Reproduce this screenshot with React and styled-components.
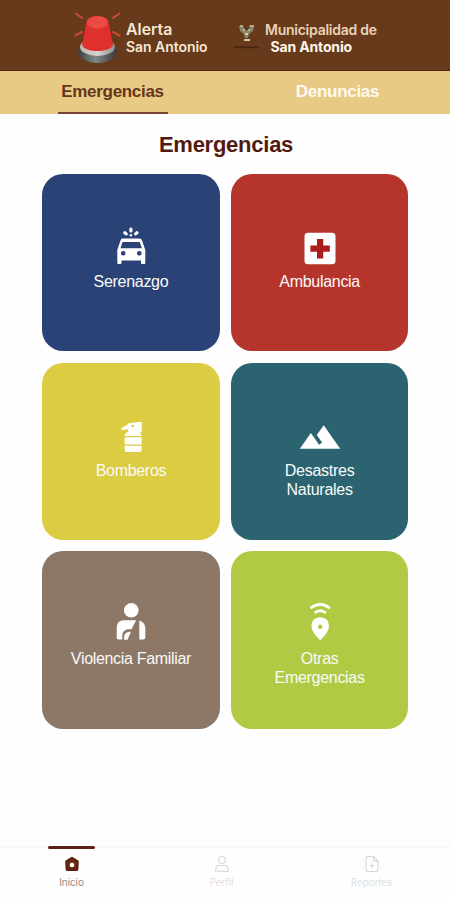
import React from "react";
import styled, { createGlobalStyle } from "styled-components";

const GlobalStyle = createGlobalStyle`
	* {
		box-sizing: border-box;
	}
	body {
		margin: 0;
		background-color: #fefefe;
		font-family: "Liberation Sans", Arial, sans-serif;
	}
	p, h1 {
		margin: 0;
	}
`;
const Screen = styled.div`
	width: 450px;
	height: 900px;
	display: flex;
	flex-direction: column;
	overflow: hidden;
`;
const Header = styled.header`
	height: 71px;
	flex-shrink: 0;
	display: flex;
	align-items: flex-start;
	padding-left: 72px;
	background-color: #673a1c;
	border-bottom: 1px solid #57290f;
`;
const SirenLogo = styled.svg`
	width: 51px;
	height: 56px;
	margin-top: 9px;
`;
const TownLogo = styled.svg`
	width: 30px;
	height: 30px;
	margin: 22px 0 0 25px;
`;
const BrandText = styled.div`
	display: flex;
	flex-direction: column;
	margin: 21px 0 0 ${(props) => props.$gap};
	width: ${(props) => props.$width};
	font-family: Inter, sans-serif;
	color: #f6e9d5;
	white-space: nowrap;
`;
const BrandLine = styled.p`
	font-size: ${(props) => props.$size};
	font-weight: ${(props) => props.$weight || 600};
	letter-spacing: ${(props) => props.$spacing || "0"};
	line-height: 17px;
	padding-left: ${(props) => props.$indent || "0"};
	color: ${(props) => props.$color || "inherit"};
`;
const Tabs = styled.nav`
	height: 43px;
	flex-shrink: 0;
	display: grid;
	grid-template-columns: 1fr 1fr;
	justify-items: center;
	background-color: #e8ca84;
`;
const Tab = styled.button`
	width: 110px;
	padding: 0;
	border: none;
	border-bottom: 2px solid ${(props) => (props.$active ? "#78442f" : "transparent")};
	background: none;
	font-family: inherit;
	font-size: 17px;
	font-weight: bold;
	letter-spacing: -0.3px;
	color: ${(props) => (props.$active ? "#65351b" : "#fffaf0")};
`;
const Title = styled.h1`
	margin: 18px 0 17px 2px;
	text-align: center;
	font-size: 22px;
	line-height: 25px;
	letter-spacing: -0.25px;
	color: #52190f;
`;
const CardGrid = styled.main`
	display: grid;
	grid-template-columns: repeat(2, 177.3px);
	grid-auto-rows: 177.3px;
	gap: 11.4px;
	padding-left: 42.3px;
	flex: 1;
`;
const Card = styled.button`
	display: flex;
	flex-direction: column;
	align-items: center;
	padding: 53px 20px 0;
	border: none;
	border-radius: 21px;
	background-color: ${(props) => props.$color};
	color: #fafafa;
`;
const CardIcon = styled.svg`
	width: 44px;
	height: 40px;
	flex-shrink: 0;
	overflow: visible;
	fill: #fff;
`;
const CardLabel = styled.span`
	margin-top: 5px;
	font-family: "Liberation Sans", Arial, sans-serif;
	font-size: 16px;
	line-height: 19px;
	letter-spacing: ${(props) => props.$spacing};
	white-space: pre-line;
`;
const BottomNav = styled.nav`
	height: 54px;
	flex-shrink: 0;
	display: grid;
	grid-template-columns: 143px 157px 143px;
	border-top: 2px solid #f8f8f8;
`;
const NavItem = styled.div`
	display: flex;
	flex-direction: column;
	align-items: center;
	color: ${(props) => (props.$active ? "#6d6462" : "#d6d6d6")};
`;
const NavMark = styled.div`
	width: 47px;
	height: 3px;
	margin-top: -2px;
	border-radius: 2px;
	background-color: ${(props) => (props.$active ? "#5b2017" : "transparent")};
`;
const NavIcon = styled.svg`
	width: 18px;
	height: 18px;
	margin-top: 6px;
	fill: none;
	stroke: currentColor;
	stroke-width: 1.1;
`;
const NavLabel = styled.span`
	margin-top: 2px;
	font-family: Inter, sans-serif;
	font-weight: 300;
	font-size: 10px;
	line-height: 14px;
`;

function Siren() {
	return (
		<SirenLogo viewBox="0 0 51 56">
			<defs>
				<linearGradient id="base" x1="0" x2="1">
					<stop offset="0" stopColor="#3c403d" />
					<stop offset="0.45" stopColor="#7f8788" />
					<stop offset="1" stopColor="#3b3833" />
				</linearGradient>
				<linearGradient id="rim" x1="0" x2="1">
					<stop offset="0" stopColor="#b9b8b0" />
					<stop offset="0.5" stopColor="#d9d2ce" />
					<stop offset="1" stopColor="#8e8f8c" />
				</linearGradient>
			</defs>
			<ellipse cx="25.500" cy="42" rx="19.500" ry="12" fill="url(#base)" />
			<ellipse cx="25.500" cy="38" rx="17.500" ry="9" fill="url(#rim)" />
			<path d="M14.500 13C15 5 36 5 36.500 13L41 36C38 44 13 44 10 36Z" fill="#df302d" />
			<ellipse cx="25.500" cy="13.500" rx="10.500" ry="6.200" fill="#e94a42" />
			<g stroke="#cf4837" strokeWidth="2" strokeLinecap="round">
				<path d="M3.500 4.500l6.500 4.300M47.500 4.500l-6.500 4.300M3.500 26.500l6.500-3.500M47.500 26.500l-6.500-3.500" />
			</g>
		</SirenLogo>
	);
}

function Town() {
	return (
		<TownLogo viewBox="0 0 30 30">
			<path d="M6 4q3-2 5 1l2 4 2-4q2-3 6-1l-1 5-4 3-1 4h-3l-1-4-4-3z" fill="#8b8468" />
			<path d="M7 4h3M17 4h4M10 8h7" stroke="#c9bf9c" strokeWidth="1.500" />
			<path d="M11.500 5l2 3 3-3" fill="none" stroke="#40372b" strokeWidth="1.500" />
			<path d="M12 12h3M11 18h6" stroke="#d6c8a6" strokeWidth="2" />
			<path d="M1 25.300h25" stroke="#4a2611" strokeWidth="1.800" />
		</TownLogo>
	);
}

const patrolIcon = (
	<>
		<g stroke="#fff" strokeWidth="3.200" strokeLinecap="round">
			<path d="M21.900 2.200v1.800M15.800 5.700l1.400 1.200M28 5.700l-1.400 1.200" />
		</g>
		<circle cx="21.900" cy="8.300" r="1.300" />
		<path
			fillRule="evenodd"
			d="M13.500 11.500h17q2 0 2.500 2l3.300 9.500v13q0 1-1 1h-2.300q-1 0-1-1v-2.500H12.500V36q0 1-1 1H9.300q-1 0-1-1V23l3.200-9.500q.5-2 2-2zM13.500 15l-2 6.200h21.300l-2-6.200zM14.200 24a2.300 2.300 0 100 4.600 2.300 2.300 0 000-4.600zM30.300 24a2.300 2.300 0 100 4.600 2.300 2.300 0 000-4.600z"
		/>
	</>
);
const ambulanceIcon = (
	<>
		<rect x="6.500" y="5.700" width="31" height="31.500" rx="3.500" />
		<path d="M19 12h6.200v6.600h6.600v6.200h-6.600v6.600H19v-6.600h-6.600v-6.200H19z" fill="#a91e1b" />
	</>
);
const extinguisherIcon = (
	<path
		fillRule="evenodd"
		d="M20 7.300l9-1.300h3.700v10.500H30q2.700 1.200 2.700 3.500H15.700q0-3 3.700-4.200l-.5-2.500-6.600 1v-2.300l5.200-2.500zM23.700 8.700a1.300 1.300 0 100 2.600 1.300 1.300 0 000-2.600zM15.700 21.200h17v7.400h-17zM15.700 29.800h17v4.200q0 2-2 2h-13q-2 0-2-2z"
	/>
);
const mountainIcon = (
	<path
		transform="translate(0 -2.400) scale(1.836 1.950)"
		d="M14 6l-3.750 5 2.850 3.800-1.600 1.200C9.810 13.750 7 10 7 10l-6 8h22z"
	/>
);
const injuredIcon = (
	<>
		<circle cx="22.300" cy="6.300" r="7.300" />
		<path d="M14 16.300h13.200l-4.700 8.900h-4q-4.700 1-5.200 5.500v4.800H9.500q-1.800 0-1.800-2V23q.3-6 6.300-6.700z" />
		<path d="M20.500 27.800h1.500L18.500 35.700h-3.400v-3.300q.5-4 5.400-4.600z" />
		<path d="M30.300 16.600q5.800 2 6 7.400v9.500q0 2-2 2h-4z" />
	</>
);
const pinIcon = (
	<>
		<g fill="none" stroke="#fff" strokeWidth="2.500">
			<path d="M12.500 4.200q9.700-7.600 19.400 0M16.600 9q5.600-4.700 11.200 0" />
		</g>
		<path
			fillRule="evenodd"
			d="M22.200 13.200q8.600.3 8.800 8.800 0 6.200-8.800 14.200-8.800-8-8.800-14.200.2-8.500 8.800-8.800zM22.200 20.500a2.200 2.200 0 100 4.400 2.200 2.200 0 000-4.400z"
		/>
	</>
);

const emergencies = [
	{ label: "Serenazgo", color: "#2a4276", spacing: "-0.3px", icon: patrolIcon },
	{ label: "Ambulancia", color: "#b5342c", spacing: "-0.3px", icon: ambulanceIcon },
	{ label: "Bomberos", color: "#dbcc41", spacing: "-0.3px", icon: extinguisherIcon },
	{ label: "Desastres\nNaturales", color: "#2b6470", spacing: "-0.25px", icon: mountainIcon },
	{ label: "Violencia Familiar", color: "#8d7766", spacing: "-0.32px", icon: injuredIcon },
	{ label: "Otras\nEmergencias", color: "#b0cb43", spacing: "-0.3px", icon: pinIcon },
];

export default function App() {
	return (
		<>
			<GlobalStyle />
			<Screen>
				<Header>
					<Siren />
					<BrandText $gap="3px" $width="82px">
						<BrandLine $size="15.8px">Alerta</BrandLine>
						<BrandLine $size="14px" $spacing="-0.05px">
							San Antonio
						</BrandLine>
					</BrandText>
					<Town />
					<BrandText $gap="2px" $width="114px">
						<BrandLine $size="14px" $spacing="-0.25px" $color="#e9d2b6">
							Municipalidad de
						</BrandLine>
						<BrandLine
							$size="14px"
							$weight={700}
							$spacing="-0.15px"
							$indent="5.500px"
							$color="#fff7ea"
						>
							San Antonio
						</BrandLine>
					</BrandText>
				</Header>
				<Tabs>
					<Tab $active>Emergencias</Tab>
					<Tab>Denuncias</Tab>
				</Tabs>
				<Title>Emergencias</Title>
				<CardGrid>
					{emergencies.map((item) => (
						<Card key={item.label} $color={item.color}>
							<CardIcon viewBox="0 0 44 40">{item.icon}</CardIcon>
							<CardLabel $spacing={item.spacing}>{item.label}</CardLabel>
						</Card>
					))}
				</CardGrid>
				<BottomNav>
					<NavItem $active>
						<NavMark $active />
						<NavIcon viewBox="0 0 18 18">
							<path
								d="M9 2.900l5.600 3.700-.5 8.100H3.900L3.400 6.600z"
								fill="#6b2c10"
								stroke="#5b2412"
								strokeWidth="2.400"
								strokeLinejoin="round"
							/>
							<circle cx="9" cy="10" r="2.300" fill="#fff" stroke="none" />
						</NavIcon>
						<NavLabel>Inicio</NavLabel>
					</NavItem>
					<NavItem>
						<NavMark />
						<NavIcon viewBox="0 0 18 18">
							<circle cx="9" cy="5" r="3.500" />
							<path d="M5.300 10.500h7.400q2.500.7 2.700 5.700H2.600q.2-5 2.700-5.700z" />
						</NavIcon>
						<NavLabel>Perfil</NavLabel>
					</NavItem>
					<NavItem>
						<NavMark />
						<NavIcon viewBox="0 0 18 18">
							<path d="M4.500 1.500h6L15 6v9q0 1.500-1.500 1.500h-9Q3 16.500 3 15V3q0-1.500 1.500-1.500zM10.500 1.500V6H15M6.800 10.800h4.400M9 8.600V13" />
						</NavIcon>
						<NavLabel>Reportes</NavLabel>
					</NavItem>
				</BottomNav>
			</Screen>
		</>
	);
}
